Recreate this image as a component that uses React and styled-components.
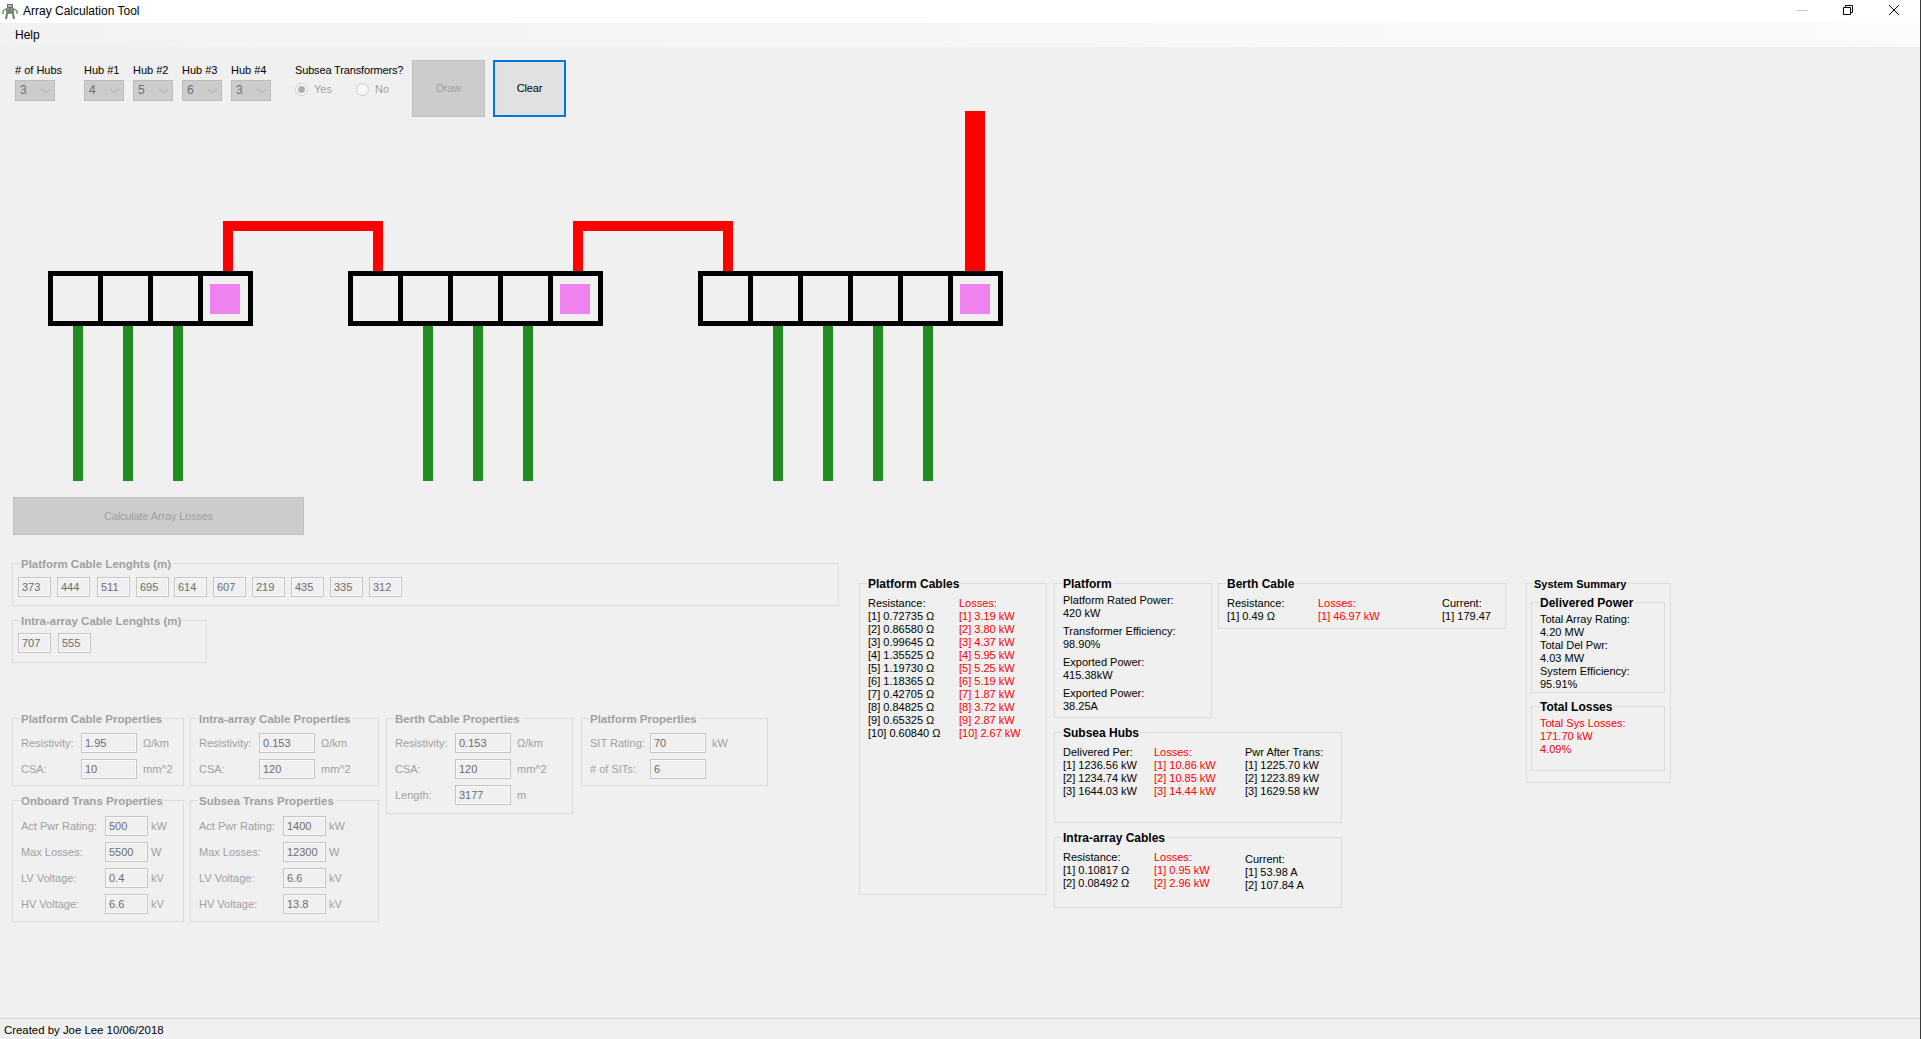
import React from 'react';
import styled, { createGlobalStyle } from 'styled-components';

const GlobalStyle = createGlobalStyle`
  html, body {
    margin: 0;
    padding: 0;
    background: #f0f0f0;
    overflow: hidden;
  }
  * {
    box-sizing: border-box;
  }
`;

const Root = styled.div`
  display: flex;
  flex-flow: column nowrap;
  width: 1921px;
  height: 1039px;
  overflow: hidden;
  background: #f0f0f0;
  border-right: 1px solid #3a3a3a;
  font-family: 'Liberation Sans', Arial, sans-serif;
  font-size: 11px;
  line-height: 13px;
  color: #000;
`;

const TitleBar = styled.div`
  display: flex;
  align-items: center;
  flex: none;
  height: 23px;
  padding: 0 2px 0 2px;
  background: #fff;
`;

const TitleText = styled.span`
  margin-left: 5px;
  font-size: 12px;
`;

const WindowButtons = styled.div`
  display: flex;
  align-self: flex-start;
  margin-left: auto;
  padding-right: 1px;
`;

const WindowButton = styled.div`
  display: flex;
  align-items: center;
  justify-content: center;
  width: 46px;
  height: 20px;
`;

const MenuBar = styled.div`
  display: flex;
  align-items: center;
  flex: none;
  height: 24px;
  padding-left: 15px;
  font-size: 12px;
  background: linear-gradient(90deg, #f2f2f2, #fbfbfb);
`;

const Toolbar = styled.div`
  display: flex;
  align-items: flex-start;
  flex: none;
  height: 70px;
  padding: 13px 0 0 15px;
`;

const ComboField = styled.div`
  display: flex;
  flex-flow: column nowrap;
  width: 40px;
  margin-top: 4px;
  margin-right: ${({ $mr = 9 }) => $mr}px;
  white-space: nowrap;
`;

const ComboBox = styled.div`
  display: flex;
  align-items: center;
  justify-content: space-between;
  height: 21px;
  margin-top: 3px;
  padding: 0 4px 0 4px;
  font-size: 12px;
  color: #6d6d6d;
  background: #ccc;
  border: 1px solid #bcbcbc;
`;

const SubseaField = styled.div`
  display: flex;
  flex-flow: column nowrap;
  flex: none;
  width: 117px;
  margin-top: 4px;
  margin-left: 15px;
  letter-spacing: -0.15px;
  white-space: nowrap;
`;

const RadioRow = styled.div`
  display: flex;
  margin-top: 6px;
  letter-spacing: 0;
`;

const RadioOption = styled.div`
  display: flex;
  align-items: center;
  flex: none;
  width: 61px;
  height: 13px;
  color: #a0a0a0;
`;

const RadioDot = styled.span`
  display: flex;
  align-items: center;
  justify-content: center;
  flex: none;
  width: 13px;
  height: 13px;
  margin-right: 6px;
  background: #f8f8f8;
  border: 1px solid #ccc;
  border-radius: 50%;

  &::after {
    content: '';
    display: ${({ $checked }) => ($checked ? 'block' : 'none')};
    width: 7px;
    height: 7px;
    background: #b0b0b0;
    border-radius: 50%;
  }
`;

const PushButton = styled.div`
  display: flex;
  align-items: center;
  justify-content: center;
  flex: none;
  width: ${({ $w = 73 }) => $w}px;
  height: ${({ $h = 57 }) => $h}px;
  margin-left: ${({ $ml = 0 }) => $ml}px;
  letter-spacing: -0.15px;
  color: ${({ $disabled }) => ($disabled ? '#a0a0a0' : '#000')};
  background: ${({ $disabled }) => ($disabled ? '#ccc' : '#e1e1e1')};
  border: ${({ $disabled }) =>
    $disabled ? '1px solid #bfbfbf' : '2px solid #0078d7'};
`;

const DiagramCanvas = styled.svg`
  display: block;
  flex: none;
  width: 1010px;
  height: 370px;
  margin-top: -6px;
`;

const Lower = styled.div`
  display: flex;
  flex: 1;
  margin-top: 16px;
`;

const LeftColumn = styled.div`
  display: flex;
  flex-flow: column nowrap;
  flex: none;
  width: 859px;
  padding-left: 12px;
`;

const Group = styled.div`
  position: relative;
  flex: none;
  width: ${({ $w }) => ($w ? `${$w}px` : 'auto')};
  height: ${({ $h }) => $h}px;
  margin-top: ${({ $mt = 0 }) => $mt}px;
  margin-left: ${({ $ml = 0 }) => $ml}px;
  padding: ${({ $pt = 10 }) => $pt}px 0 0 ${({ $pl = 8 }) => $pl}px;
  border: 1px solid #dcdcdc;
  grid-column: ${({ $col = 'auto' }) => $col};
  grid-row: ${({ $row = 'auto' }) => $row};
`;

const Legend = styled.span`
  position: absolute;
  top: -7px;
  left: ${({ $left = 7 }) => $left}px;
  padding: 0 1px;
  font-size: ${({ $size = 12 }) => $size}px;
  line-height: 14px;
  font-weight: 700;
  white-space: nowrap;
  color: ${({ $muted }) => ($muted ? '#a0a0a0' : '#000')};
  background: #f0f0f0;
`;

const BoxRow = styled.div`
  display: flex;
`;

const ValueBox = styled.div`
  display: flex;
  align-items: center;
  flex: none;
  width: ${({ $w = 33 }) => $w}px;
  height: 20px;
  margin-right: ${({ $mr = 0 }) => $mr}px;
  padding-left: 3px;
  color: #6d6d6d;
  background: #f0f0f0;
  border: 1px solid #c6c6c6;
  box-shadow: inset 0 0 0 1px #f9f9f9;
`;

const PropsGrid = styled.div`
  display: grid;
  grid-template-columns: 178px 196px 195px 187px;
  grid-template-rows: 82px auto;
  margin-top: 55px;
`;

const FieldRow = styled.div`
  display: flex;
  align-items: center;
  height: 20px;
  margin-bottom: 6px;
  color: #a0a0a0;
`;

const FieldLabel = styled.span`
  flex: none;
  width: ${({ $w = 60 }) => $w}px;
  white-space: nowrap;
`;

const FieldUnit = styled.span`
  margin-left: ${({ $ml = 6 }) => $ml}px;
  white-space: nowrap;
`;

const ResultsGrid = styled.div`
  display: grid;
  grid-template-columns: 195px 164px 124px 164px 20px 145px;
  grid-template-rows: 149px 105px 71px;
  align-items: start;
  margin-top: 86px;
`;

const Columns = styled.div`
  display: flex;
`;

const TextColumn = styled.div`
  flex: none;
  width: ${({ $w = 91 }) => $w}px;
  margin-top: ${({ $mt = 0 }) => $mt}px;
  white-space: nowrap;
  color: ${({ $loss }) => ($loss ? '#ff0000' : '#000')};
`;

const Stat = styled.div`
  margin-bottom: ${({ $mb = 5 }) => $mb}px;
  white-space: nowrap;
  color: ${({ $loss }) => ($loss ? '#ff0000' : '#000')};
`;

const StatusBar = styled.div`
  display: flex;
  align-items: center;
  flex: none;
  height: 21px;
  padding: 2px 0 0 4px;
  font-size: 11.4px;
  border-top: 1px solid #d7d7d7;
`;

const Lines = ({ items }) =>
  items.map((item) => <div key={item}>{item}</div>);

const AppIcon = () => (
  <svg width="16" height="18" viewBox="0 0 16 18">
    <rect x="5" y="1" width="6" height="4" fill="#6f6f6f" />
    <rect x="6" y="2" width="4" height="2" fill="#b5b5b5" />
    <rect x="4" y="5" width="8" height="6" fill="#8a8a8a" />
    <rect x="4" y="7" width="8" height="3" fill="#5d9a5d" />
    <path d="M4 6 L1 8 L1 11 M12 6 L15 8 L15 11" fill="none" stroke="#7a7a7a" strokeWidth="1.4" />
    <path d="M5 11 L4 16 M11 11 L12 16" fill="none" stroke="#777" strokeWidth="2" />
  </svg>
);

const Chevron = () => (
  <svg width="9" height="6" viewBox="0 0 9 6">
    <path d="M0.5 1 L4.5 5 L8.5 1" fill="none" stroke="#a8a8a8" strokeWidth="1" />
  </svg>
);

const Combo = ({ label, value, mr }) => (
  <ComboField $mr={mr}>
    {label}
    <ComboBox>
      {value}
      <Chevron />
    </ComboBox>
  </ComboField>
);

const hubs = [
  { x: 48, cells: 4, pink: 210, greens: [73, 123, 173] },
  { x: 348, cells: 5, pink: 560, greens: [423, 473, 523] },
  { x: 698, cells: 6, pink: 960, greens: [773, 823, 873, 923] },
];

const Diagram = () => (
  <DiagramCanvas viewBox="0 111 1010 370">
    <path
      d="M228 271 V226 H378 V271 M578 271 V226 H728 V271"
      fill="none"
      stroke="#ff0000"
      strokeWidth="10"
    />
    <rect x="965" y="111" width="20" height="160" fill="#ff0000" />
    {hubs.map((hub) => (
      <g key={hub.x}>
        <rect
          x={hub.x + 2.5}
          y="273.5"
          width={hub.cells * 50}
          height="50"
          fill="none"
          stroke="#000"
          strokeWidth="5"
        />
        {Array.from({ length: hub.cells - 1 }, (_, i) => (
          <rect key={i} x={hub.x + 50 * (i + 1)} y="271" width="5" height="55" fill="#000" />
        ))}
        <rect x={hub.pink} y="284" width="30" height="30" fill="#ee82ee" />
        {hub.greens.map((x) => (
          <rect key={x} x={x} y="326" width="10" height="155" fill="#228b22" />
        ))}
      </g>
    ))}
  </DiagramCanvas>
);

const PropertyGroup = ({ title, rows, w, h, labelW, boxW, unitMl, pt = 14, col, row }) => (
  <Group $w={w} $h={h} $pt={pt} $col={col} $row={row}>
    <Legend $muted $size={11.5}>{title}</Legend>
    {rows.map(([label, value, unit]) => (
      <FieldRow key={label}>
        <FieldLabel $w={labelW}>{label}</FieldLabel>
        <ValueBox $w={boxW}>{value}</ValueBox>
        <FieldUnit $ml={unitMl}>{unit}</FieldUnit>
      </FieldRow>
    ))}
  </Group>
);

const platformLengths = [
  ['373', 6], ['444', 7], ['511', 6], ['695', 5], ['614', 6],
  ['607', 6], ['219', 6], ['435', 6], ['335', 6], ['312', 0],
];

const platformResistance = [
  '[1] 0.72735 Ω', '[2] 0.86580 Ω', '[3] 0.99645 Ω', '[4] 1.35525 Ω', '[5] 1.19730 Ω',
  '[6] 1.18365 Ω', '[7] 0.42705 Ω', '[8] 0.84825 Ω', '[9] 0.65325 Ω', '[10] 0.60840 Ω',
];

const platformLosses = [
  '[1] 3.19 kW', '[2] 3.80 kW', '[3] 4.37 kW', '[4] 5.95 kW', '[5] 5.25 kW',
  '[6] 5.19 kW', '[7] 1.87 kW', '[8] 3.72 kW', '[9] 2.87 kW', '[10] 2.67 kW',
];

export default function App() {
  return (
    <Root>
      <GlobalStyle />
      <TitleBar>
        <AppIcon />
        <TitleText>Array Calculation Tool</TitleText>
        <WindowButtons>
          <WindowButton>
            <svg width="10" height="10" viewBox="0 0 10 10">
              <path d="M0 5.5 H10" stroke="#c8c8c8" />
            </svg>
          </WindowButton>
          <WindowButton>
            <svg width="10" height="10" viewBox="0 0 10 10">
              <path d="M0.5 2.5 H7.5 V9.5 H0.5 Z M2.5 2.5 V0.5 H9.5 V7.5 H7.5" fill="none" stroke="#000" />
            </svg>
          </WindowButton>
          <WindowButton>
            <svg width="10" height="10" viewBox="0 0 10 10">
              <path d="M0 0 L10 10 M10 0 L0 10" fill="none" stroke="#000" strokeWidth="1" />
            </svg>
          </WindowButton>
        </WindowButtons>
      </TitleBar>

      <MenuBar>Help</MenuBar>

      <Toolbar>
        <Combo label="# of Hubs" value="3" mr={29} />
        <Combo label="Hub #1" value="4" />
        <Combo label="Hub #2" value="5" />
        <Combo label="Hub #3" value="6" />
        <Combo label="Hub #4" value="3" mr={9} />
        <SubseaField>
          Subsea Transformers?
          <RadioRow>
            <RadioOption>
              <RadioDot $checked />
              Yes
            </RadioOption>
            <RadioOption>
              <RadioDot />
              No
            </RadioOption>
          </RadioRow>
        </SubseaField>
        <PushButton $disabled>Draw</PushButton>
        <PushButton $ml={8}>Clear</PushButton>
      </Toolbar>

      <Diagram />

      <Lower>
        <LeftColumn>
          <PushButton $disabled $w={291} $h={38} $ml={1}>
            Calculate Array Losses
          </PushButton>

          <Group $w={827} $h={43} $mt={28} $pt={13} $pl={5}>
            <Legend $muted $size={11.5}>Platform Cable Lenghts (m)</Legend>
            <BoxRow>
              {platformLengths.map(([value, gap]) => (
                <ValueBox key={value} $mr={gap}>
                  {value}
                </ValueBox>
              ))}
            </BoxRow>
          </Group>

          <Group $w={195} $h={43} $mt={14} $pt={12} $pl={5}>
            <Legend $muted $size={11.5}>Intra-array Cable Lenghts (m)</Legend>
            <BoxRow>
              <ValueBox $mr={7}>707</ValueBox>
              <ValueBox>555</ValueBox>
            </BoxRow>
          </Group>

          <PropsGrid>
            <PropertyGroup
              title="Platform Cable Properties"
              w={172}
              h={68}
              labelW={60}
              boxW={56}
              rows={[
                ['Resistivity:', '1.95', 'Ω/km'],
                ['CSA:', '10', 'mm^2'],
              ]}
            />
            <PropertyGroup
              title="Intra-array Cable Properties"
              w={189}
              h={68}
              labelW={60}
              boxW={56}
              rows={[
                ['Resistivity:', '0.153', 'Ω/km'],
                ['CSA:', '120', 'mm^2'],
              ]}
            />
            <PropertyGroup
              title="Berth Cable Properties"
              w={187}
              h={96}
              labelW={60}
              boxW={56}
              row="1 / span 2"
              rows={[
                ['Resistivity:', '0.153', 'Ω/km'],
                ['CSA:', '120', 'mm^2'],
                ['Length:', '3177', 'm'],
              ]}
            />
            <PropertyGroup
              title="Platform Properties"
              w={187}
              h={68}
              labelW={60}
              boxW={56}
              row="1 / span 2"
              rows={[
                ['SIT Rating:', '70', 'kW'],
                ['# of SITs:', '6', ''],
              ]}
            />
            <PropertyGroup
              title="Onboard Trans Properties"
              w={172}
              h={122}
              pt={15}
              labelW={84}
              boxW={43}
              unitMl={3}
              col="1"
              row="2"
              rows={[
                ['Act Pwr Rating:', '500', 'kW'],
                ['Max Losses:', '5500', 'W'],
                ['LV Voltage:', '0.4', 'kV'],
                ['HV Voltage:', '6.6', 'kV'],
              ]}
            />
            <PropertyGroup
              title="Subsea Trans Properties"
              w={189}
              h={122}
              pt={15}
              labelW={84}
              boxW={43}
              unitMl={3}
              col="2"
              row="2"
              rows={[
                ['Act Pwr Rating:', '1400', 'kW'],
                ['Max Losses:', '12300', 'W'],
                ['LV Voltage:', '6.6', 'kV'],
                ['HV Voltage:', '13.8', 'kV'],
              ]}
            />
          </PropsGrid>
        </LeftColumn>

        <ResultsGrid>
          <Group $w={188} $h={312} $pt={13} $col="1" $row="1 / span 3">
            <Legend>Platform Cables</Legend>
            <Columns>
              <TextColumn>
                Resistance:
                <Lines items={platformResistance} />
              </TextColumn>
              <TextColumn $loss>
                Losses:
                <Lines items={platformLosses} />
              </TextColumn>
            </Columns>
          </Group>

          <Group $w={158} $h={135} $col="2" $row="1">
            <Legend>Platform</Legend>
            <Stat>
              Platform Rated Power:
              <div>420 kW</div>
            </Stat>
            <Stat>
              Transformer Efficiency:
              <div>98.90%</div>
            </Stat>
            <Stat>
              Exported Power:
              <div>415.38kW</div>
            </Stat>
            <Stat>
              Exported Power:
              <div>38.25A</div>
            </Stat>
          </Group>

          <Group $h={46} $pt={13} $col="3 / span 2" $row="1">
            <Legend>Berth Cable</Legend>
            <Columns>
              <TextColumn>
                Resistance:
                <div>[1] 0.49 Ω</div>
              </TextColumn>
              <TextColumn $loss $w={124}>
                Losses:
                <div>[1] 46.97 kW</div>
              </TextColumn>
              <TextColumn $w={60}>
                Current:
                <div>[1] 179.47</div>
              </TextColumn>
            </Columns>
          </Group>

          <Group $h={91} $pt={13} $col="2 / span 2" $row="2">
            <Legend>Subsea Hubs</Legend>
            <Columns>
              <TextColumn>
                Delivered Per:
                <Lines items={['[1] 1236.56 kW', '[2] 1234.74 kW', '[3] 1644.03 kW']} />
              </TextColumn>
              <TextColumn $loss>
                Losses:
                <Lines items={['[1] 10.86 kW', '[2] 10.85 kW', '[3] 14.44 kW']} />
              </TextColumn>
              <TextColumn>
                Pwr After Trans:
                <Lines items={['[1] 1225.70 kW', '[2] 1223.89 kW', '[3] 1629.58 kW']} />
              </TextColumn>
            </Columns>
          </Group>

          <Group $h={71} $pt={13} $col="2 / span 2" $row="3">
            <Legend>Intra-array Cables</Legend>
            <Columns>
              <TextColumn>
                Resistance:
                <Lines items={['[1] 0.10817 Ω', '[2] 0.08492 Ω']} />
              </TextColumn>
              <TextColumn $loss>
                Losses:
                <Lines items={['[1] 0.95 kW', '[2] 2.96 kW']} />
              </TextColumn>
              <TextColumn $mt={2}>
                Current:
                <Lines items={['[1] 53.98 A', '[2] 107.84 A']} />
              </TextColumn>
            </Columns>
          </Group>

          <Group $w={145} $h={200} $pt={18} $pl={4} $col="6" $row="1 / span 3">
            <Legend $left={6} $size={11}>System Summary</Legend>
            <Group $w={134} $h={91}>
              <Legend>Delivered Power</Legend>
              <Stat $mb={0}>Total Array Rating:</Stat>
              <Stat $mb={0}>4.20 MW</Stat>
              <Stat $mb={0}>Total Del Pwr:</Stat>
              <Stat $mb={0}>4.03 MW</Stat>
              <Stat $mb={0}>System Efficiency:</Stat>
              <Stat $mb={0}>95.91%</Stat>
            </Group>
            <Group $w={134} $h={65} $mt={13}>
              <Legend>Total Losses</Legend>
              <Stat $loss $mb={0}>Total Sys Losses:</Stat>
              <Stat $loss $mb={0}>171.70 kW</Stat>
              <Stat $loss $mb={0}>4.09%</Stat>
            </Group>
          </Group>
        </ResultsGrid>
      </Lower>

      <StatusBar>Created by Joe Lee 10/06/2018</StatusBar>
    </Root>
  );
}
